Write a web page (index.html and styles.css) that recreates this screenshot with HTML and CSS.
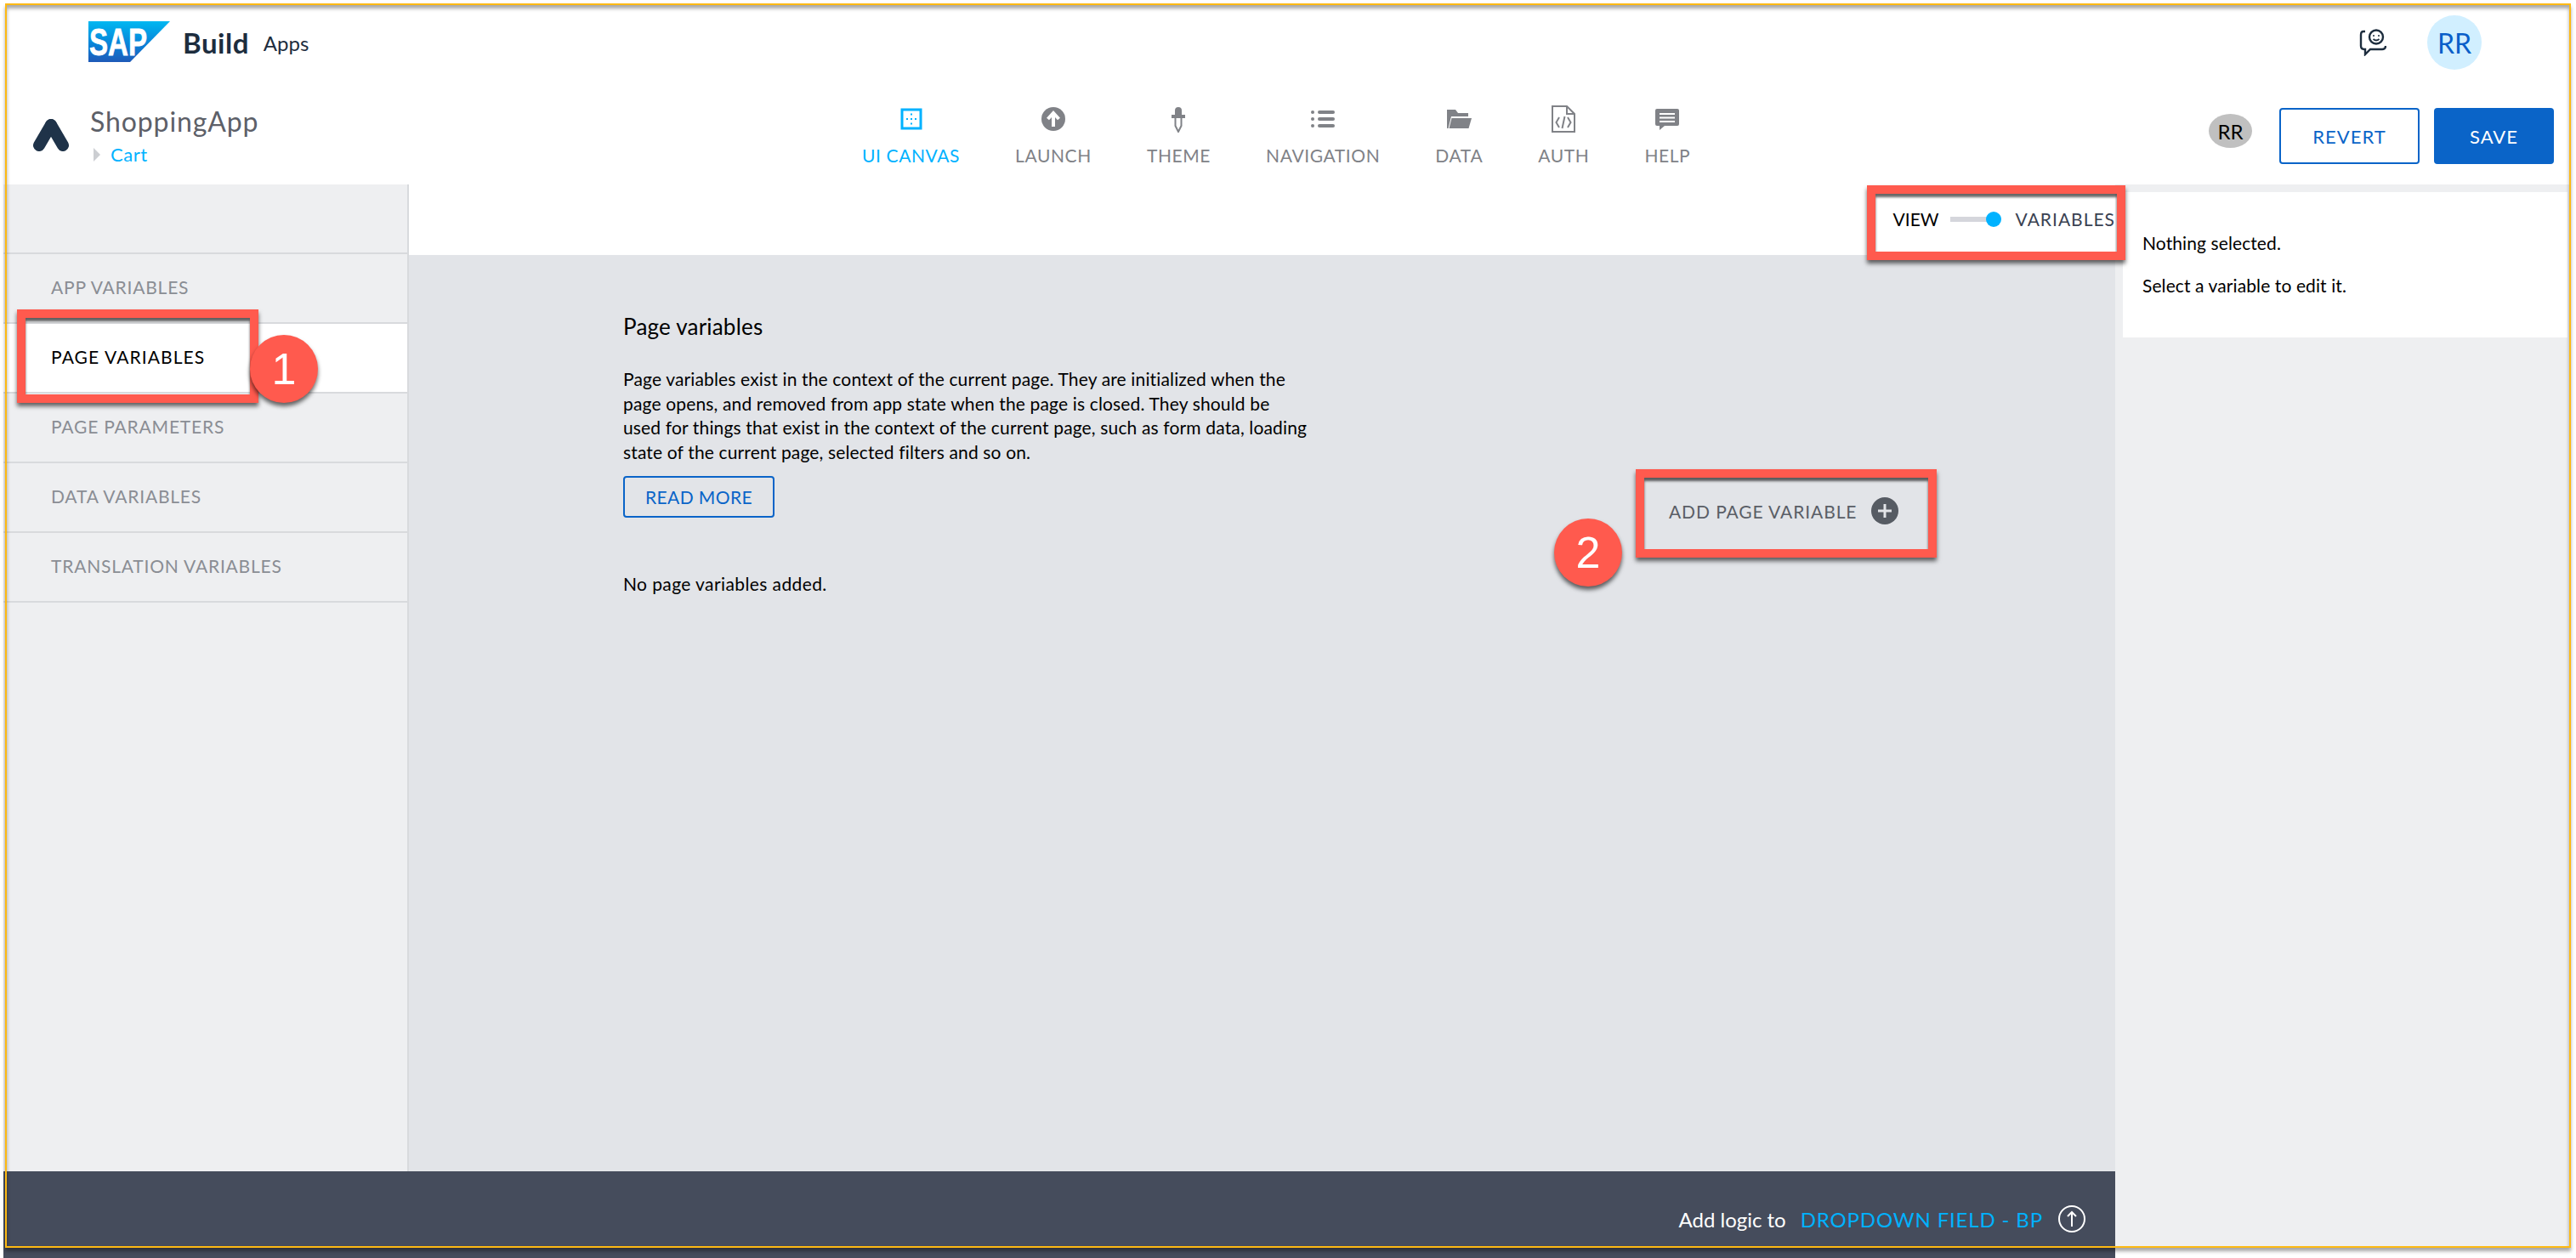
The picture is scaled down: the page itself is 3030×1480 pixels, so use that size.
FILE: index.html
```html
<!DOCTYPE html>
<html lang="en">
<head>
    <meta charset="UTF-8">
    <title>SAP Build Apps - Page variables</title>
    <link rel="stylesheet" href="styles.css">
</head>
<body>
    <div class="page">
        <header class="brand-bar">
            <svg class="sap-logo" viewBox="0 0 96 48" width="96" height="48">
                <defs>
                    <linearGradient id="sapfill" x1="0" y1="0" x2="0" y2="1">
                        <stop offset="0" stop-color="#00b8f1"/>
                        <stop offset="0.6" stop-color="#0a7fd6"/>
                        <stop offset="1" stop-color="#1e5ab8"/>
                    </linearGradient>
                </defs>
                <polygon points="0,0 96,0 49,48 0,48" fill="url(#sapfill)"/>
                <text class="sap-word" x="1" y="40" textLength="68" lengthAdjust="spacingAndGlyphs">SAP</text>
            </svg>
            <span class="brand-build">Build</span>
            <span class="brand-apps">Apps</span>
            <div class="brand-right">
                <svg class="smile-icon" viewBox="0 0 32 32" width="32" height="32" fill="none" stroke="#1d2d3e" stroke-width="2.4">
                    <circle cx="20" cy="9.5" r="8"/>
                    <circle cx="17" cy="8" r="1" fill="#1d2d3e" stroke="none"/>
                    <circle cx="23" cy="8" r="1" fill="#1d2d3e" stroke="none"/>
                    <path d="M16.500 12 q3.500 3 7 0" stroke-width="1.800"/>
                    <path d="M7 3 H5 Q2 3 2 7 V20 Q2 24 6 24 H7 V30 L13 24 H27 Q31 24 31 20"/>
                </svg>
                <div class="avatar-big">RR</div>
            </div>
        </header>

        <div class="app-bar">
            <div class="app-title">
                <svg class="app-logo" viewBox="0 0 44 38" width="44" height="38">
                    <path d="M22 7 L8 31" stroke="#1f3349" stroke-width="14" stroke-linecap="round" fill="none"/>
                    <path d="M22 7 L36 31" stroke="#1f3349" stroke-width="14" stroke-linecap="round" fill="none"/>
                </svg>
                <div class="app-name-wrap">
                    <div class="app-name">ShoppingApp</div>
                    <div class="crumb"><span class="crumb-arrow"></span>Cart</div>
                </div>
            </div>
            <nav class="main-nav">
                <a class="nav-item active">
                    <svg viewBox="0 0 32 32" width="32" height="32">
                        <rect x="5" y="5" width="22" height="22" fill="none" stroke="#00b2ff" stroke-width="3"/>
                        <g fill="#00b2ff">
                            <rect x="15" y="9.500" width="2" height="2"/><rect x="15" y="15" width="2" height="2"/><rect x="15" y="20.500" width="2" height="2"/>
                            <rect x="10" y="15" width="2" height="2"/><rect x="20" y="15" width="2" height="2"/>
                        </g>
                    </svg>
                    UI CANVAS
                </a>
                <a class="nav-item">
                    <svg viewBox="0 0 32 32" width="32" height="32">
                        <circle cx="16" cy="16" r="14" fill="#808287"/>
                        <path d="M16 25 V11 M9.500 16 L16 9 L22.500 16" stroke="#fff" stroke-width="4" fill="none"/>
                    </svg>
                    LAUNCH
                </a>
                <a class="nav-item">
                    <svg viewBox="0 0 32 32" width="32" height="32">
                        <path d="M12 11 V6 a4 4 0 0 1 8 0 V11 H24 V15 H8 V11 Z" fill="#808287"/>
                        <path d="M12.500 15 V24 L16 31 L19.500 24 V15" fill="none" stroke="#808287" stroke-width="2"/>
                    </svg>
                    THEME
                </a>
                <a class="nav-item">
                    <svg viewBox="0 0 32 32" width="32" height="32" fill="#808287">
                        <circle cx="4" cy="8" r="2"/><circle cx="4" cy="16" r="2"/><circle cx="4" cy="24" r="2"/>
                        <rect x="10" y="6" width="20" height="4" rx="2"/><rect x="10" y="14" width="20" height="4" rx="2"/><rect x="10" y="22" width="20" height="4" rx="2"/>
                    </svg>
                    NAVIGATION
                </a>
                <a class="nav-item">
                    <svg viewBox="0 0 32 32" width="32" height="32" fill="#808287">
                        <path d="M2 5 H12 L15 9 H27 V13 H7 L3.500 27 H2 Z"/>
                        <path d="M7.500 15 H31 L27.500 27 H4.500 Z"/>
                    </svg>
                    DATA
                </a>
                <a class="nav-item">
                    <svg viewBox="0 0 32 32" width="32" height="32" fill="none" stroke="#808287" stroke-width="2">
                        <path d="M3 1 H20 L29 10 V31 H3 Z"/>
                        <path d="M20 1 V10 H29"/>
                        <path d="M11 14 L7.500 20 L11 26 M21 14 L24.500 20 L21 26 M17.500 13 L14.500 27"/>
                    </svg>
                    AUTH
                </a>
                <a class="nav-item">
                    <svg viewBox="0 0 32 32" width="32" height="32">
                        <path d="M4 4 H28 a2 2 0 0 1 2 2 V22 a2 2 0 0 1 -2 2 H13 L7 29 V24 H4 a2 2 0 0 1 -2 -2 V6 a2 2 0 0 1 2 -2 Z" fill="#808287"/>
                        <path d="M7 10 H25 M7 14.500 H25 M7 19 H25" stroke="#fff" stroke-width="2"/>
                    </svg>
                    HELP
                </a>
            </nav>
            <div class="app-actions">
                <div class="avatar-small">RR</div>
                <button class="btn btn-outline btn-revert">REVERT</button>
                <button class="btn btn-solid">SAVE</button>
            </div>
        </div>

        <div class="workspace">
            <div class="editor">
                <div class="editor-top">
                    <aside class="sidebar">
                        <div class="side-item">APP VARIABLES</div>
                        <div class="side-item selected">PAGE VARIABLES</div>
                        <div class="side-item">PAGE PARAMETERS</div>
                        <div class="side-item">DATA VARIABLES</div>
                        <div class="side-item">TRANSLATION VARIABLES</div>
                    </aside>
                    <main class="content">
                        <div class="view-bar">
                            <span class="view-label">VIEW</span>
                            <span class="switch"><span class="switch-knob"></span></span>
                            <span class="variables-label">VARIABLES</span>
                        </div>
                        <div class="content-body">
                            <div class="intro">
                                <h2>Page variables</h2>
                                <p>Page variables exist in the context of the current page. They are initialized when the page opens, and removed from app state when the page is closed. They should be used for things that exist in the context of the current page, such as form data, loading state of the current page, selected filters and so on.</p>
                                <button class="btn btn-outline btn-read">READ MORE</button>
                                <div class="empty-note">No page variables added.</div>
                            </div>
                            <div class="add-var">
                                ADD PAGE VARIABLE
                                <svg viewBox="0 0 32 32" width="32" height="32">
                                    <circle cx="16" cy="16" r="16" fill="#565b63"/>
                                    <path d="M16 8 V24 M8 16 H24" stroke="#e2e4e8" stroke-width="3"/>
                                </svg>
                            </div>
                        </div>
                    </main>
                </div>
                <footer class="logic-bar">
                    <span class="logic-text">Add logic to</span>
                    <span class="logic-target">DROPDOWN FIELD - BP</span>
                    <svg viewBox="0 0 32 32" width="32" height="32" fill="none" stroke="#fff" stroke-width="2">
                        <circle cx="16" cy="16" r="15"/>
                        <path d="M16 25 V8 M11 13 L16 8 L21 13"/>
                    </svg>
                </footer>
            </div>
            <aside class="inspector">
                <div class="inspector-card">
                    <p>Nothing selected.</p>
                    <p>Select a variable to edit it.</p>
                </div>
            </aside>
        </div>

        <!-- annotations drawn on top of the screenshot -->
        <div class="window-frame"></div>
        <div class="callout-box box-view"></div>
        <div class="callout-box box-page"></div>
        <div class="callout-box box-add"></div>
        <div class="callout-badge badge-one">1</div>
        <div class="callout-badge badge-two">2</div>
    </div>
</body>
</html>
```

FILE: styles.css
```css
* {
  box-sizing: border-box;
}

body {
  margin: 0;
  background-color: #fff;
  font-family: Lato, "Open Sans", sans-serif;
  color: #000;
}

.page {
  position: relative;
  width: 3030px;
  height: 1480px;
  overflow: hidden;
  padding-left: 4px;
}

/* top brand row */
.brand-bar {
  display: flex;
  align-items: center;
  height: 100px;
  padding: 0 0 0 100px;
}

.sap-logo {
  margin-top: -2px;
}

.sap-word {
  font-family: "Liberation Sans", sans-serif;
  font-weight: 700;
  font-size: 45px;
  fill: #fff;
  stroke: #fff;
  stroke-width: 0.8px;
}

.brand-build {
  margin-left: 15px;
  font-size: 33px;
  font-weight: 700;
  letter-spacing: 0.5px;
  color: #1d2d3e;
}

.brand-apps {
  margin-left: 17px;
  font-size: 24px;
  color: #1d2d3e;
}

.brand-right {
  display: flex;
  align-items: center;
  margin-left: auto;
  padding-right: 111px;
  gap: 48px;
}

.avatar-big {
  display: flex;
  align-items: center;
  justify-content: center;
  width: 64px;
  height: 64px;
  border-radius: 50%;
  background-color: #d1efff;
  color: #0a5fc9;
  font-size: 32px;
}

/* app row */
.app-bar {
  display: flex;
  height: 117px;
}

.app-title {
  display: flex;
  width: 1010px;
  padding: 40px 0 0 34px;
}

.app-name-wrap {
  margin: -17px 0 0 24px;
}

.app-name {
  font-size: 32px;
  line-height: 40px;
  letter-spacing: 0.9px;
  color: #5d6068;
}

.crumb {
  display: flex;
  align-items: center;
  margin-top: 7px;
  font-size: 22px;
  line-height: 24px;
  letter-spacing: 0.5px;
  color: #00b2ff;
}

.crumb-arrow {
  width: 0;
  height: 0;
  margin: 0 12px 0 4px;
  border-left: 8px solid #ccced2;
  border-top: 8px solid transparent;
  border-bottom: 8px solid transparent;
}

.main-nav {
  display: flex;
  gap: 65px;
  padding-top: 24px;
}

.nav-item {
  display: flex;
  flex-direction: column;
  align-items: center;
  font-size: 21px;
  line-height: 24px;
  letter-spacing: 0.6px;
  gap: 15px;
  color: #808287;
}

.nav-item.active {
  color: #00b2ff;
}

.app-actions {
  display: flex;
  align-items: flex-start;
  margin-left: auto;
  padding: 27px 26px 0 0;
}

.avatar-small {
  display: flex;
  align-items: center;
  justify-content: center;
  width: 51px;
  height: 40px;
  margin: 7px 32px 0 0;
  border-radius: 50%;
  background-color: #c0c0c0;
  font-size: 24px;
}

.btn {
  font-family: inherit;
  font-size: 22px;
  letter-spacing: 1px;
  border-radius: 4px;
  padding: 0;
}

.btn-outline {
  background-color: #fff;
  border: 2px solid #0a64c8;
  color: #0a64c8;
}

.btn-solid {
  width: 141px;
  height: 66px;
  background-color: #0a64c8;
  border: none;
  color: #fff;
}

.btn-revert {
  width: 165px;
  height: 66px;
  margin-right: 17px;
}

/* main area */
.workspace {
  display: flex;
  height: 1263px;
}

.editor {
  display: flex;
  flex-direction: column;
  width: 2484px;
}

.editor-top {
  display: flex;
  height: 1161px;
}

.sidebar {
  width: 477px;
  padding-top: 80px;
  background-color: #eeeff1;
  border-right: 2px solid #d8dadd;
}

.side-item {
  display: flex;
  align-items: center;
  height: 82px;
  padding: 0 0 3px 56px;
  border-top: 2px solid #d8dadd;
  font-size: 21px;
  letter-spacing: 0.8px;
  color: #8a8d94;
}

.side-item:last-child {
  border-bottom: 2px solid #d8dadd;
  height: 84px;
}

.side-item.selected {
  background-color: #fff;
  color: #000;
  letter-spacing: 1.1px;
}

.content {
  flex: 1;
  display: flex;
  flex-direction: column;
  background-color: #e2e4e8;
}

.view-bar {
  display: flex;
  align-items: center;
  justify-content: flex-end;
  height: 83px;
  padding-bottom: 2px;
  background-color: #fff;
  font-size: 21px;
}

.view-label {
  color: #000;
}

.switch {
  position: relative;
  width: 46px;
  height: 6px;
  margin: 0 31px 0 13px;
  background-color: #d5d6dc;
}

.switch-knob {
  position: absolute;
  top: -6px;
  right: -14px;
  width: 18px;
  height: 18px;
  border-radius: 50%;
  background-color: #00b2ff;
}

.variables-label {
  letter-spacing: 1px;
  color: #3a4252;
}

.content-body {
  display: flex;
  padding: 69px 0 0 252px;
}

.intro {
  width: 805px;
}

.intro h2 {
  margin: 0;
  font-size: 26px;
  font-weight: 400;
  line-height: 30px;
  letter-spacing: 0.2px;
}

.intro p {
  margin: 33px 0 0 0;
  font-size: 21px;
  line-height: 28.700px;
  letter-spacing: 0.15px;
}

.btn-read {
  display: block;
  width: 178px;
  height: 49px;
  margin-top: 13px;
  background-color: transparent;
  font-size: 21px;
  letter-spacing: 0.4px;
}

.empty-note {
  margin-top: 64px;
  font-size: 21px;
  line-height: 28px;
  letter-spacing: 0.4px;
}

.add-var {
  display: flex;
  align-items: center;
  gap: 17px;
  height: 32px;
  margin: 216px 0 0 425px;
  font-size: 21px;
  letter-spacing: 0.9px;
  color: #5a5e66;
}

.logic-bar {
  display: flex;
  align-items: center;
  justify-content: flex-end;
  height: 102px;
  padding: 10px 35px 0 0;
  background-color: #454c5c;
  font-size: 24px;
  color: #fff;
}

.logic-target {
  margin: 0 18px 0 17px;
  letter-spacing: 0.85px;
  color: #00b2ff;
}

.inspector {
  width: 535px;
  height: 1250px;
  padding: 9px 3px 0 9px;
  background-color: #eeeff1;
}

.inspector-card {
  height: 171px;
  padding: 48px 0 0 23px;
  background-color: #fff;
  font-size: 21px;
}

.inspector-card p {
  margin: 0 0 26px 0;
  line-height: 24px;
  letter-spacing: 0.1px;
}

/* annotations */
.window-frame {
  position: absolute;
  left: 6px;
  top: 4px;
  width: 3018px;
  height: 1464px;
  border: 2px solid #fdb913;
  box-shadow: 0 4px 4px rgba(0, 0, 0, 0.35), inset 0 4px 4px rgba(0, 0, 0, 0.35);
}

.callout-box {
  position: absolute;
  border: 10px solid #ff5a4e;
  box-shadow: 0 4px 5px rgba(0, 0, 0, 0.6), inset 0 4px 3px rgba(0, 0, 0, 0.6);
}

.box-view {
  left: 2196px;
  top: 218px;
  width: 304px;
  height: 88px;
}

.box-page {
  left: 20px;
  top: 364px;
  width: 284px;
  height: 110px;
}

.box-add {
  left: 1924px;
  top: 552px;
  width: 354px;
  height: 104px;
}

.callout-badge {
  position: absolute;
  display: flex;
  align-items: center;
  justify-content: center;
  width: 80px;
  height: 80px;
  border-radius: 50%;
  background-color: #ff5a4e;
  box-shadow: 0 4px 5px rgba(0, 0, 0, 0.6);
  font-family: "Liberation Sans", sans-serif;
  font-size: 52px;
  color: #fff;
}

.badge-one {
  left: 294px;
  top: 394px;
}

.badge-two {
  left: 1828px;
  top: 610px;
}
```
